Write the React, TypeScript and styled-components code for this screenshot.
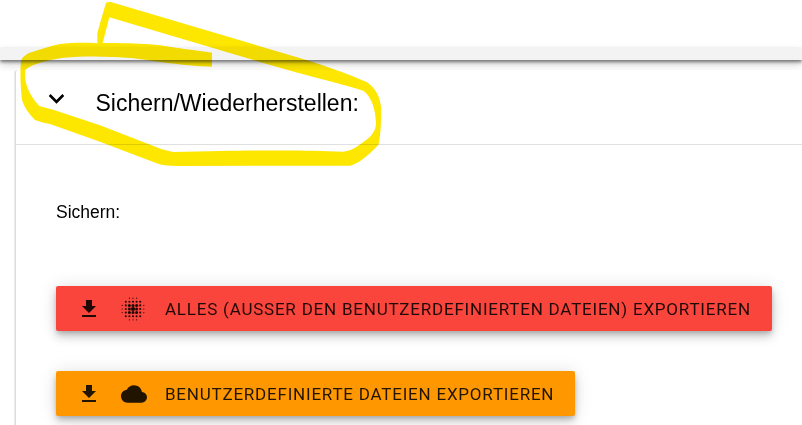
import React from 'react';
import styled, { createGlobalStyle } from 'styled-components';

const Global = createGlobalStyle`
  html, body { margin: 0; padding: 0; background: #fff; }
  body { font-family: "Liberation Sans", Arial, sans-serif; overflow: hidden; }
  #root { width: 802px; height: 425px; overflow: hidden; }
`;

const Page = styled.div`
  position: relative;
  width: 802px;
  height: 425px;
  overflow: hidden;
  background: #fff;
`;

const TopBar = styled.div`
  height: 48px;
  background: #fff;
`;

const Band = styled.div`
  height: 12px;
  background: #f3f3f3;
  box-shadow: 0 2px 3px rgba(0, 0, 0, 0.45), 0 4px 8px rgba(0, 0, 0, 0.2);
  position: relative;
  z-index: 1;
`;

const Panel = styled.section`
  margin: 10px 0 0 15px;
  border-left: 1px solid #dcdcdc;
  box-shadow: -1px 0 1px #ececec;
  border-top-left-radius: 3px;
  background: #fff;
  position: relative;
  z-index: 2;
  height: 400px;
`;

const PanelHeader = styled.div`
  height: 66px;
  padding-bottom: 8px;
  display: flex;
  align-items: center;
  border-bottom: 1px solid #e0e0e0;
`;

const Chevron = styled.svg`
  width: 31px;
  height: 31px;
  margin-left: 24.5px;
  margin-top: -10px;
  fill: #000;
  flex: none;
`;

const Title = styled.h2`
  margin: 0 0 0 24px;
  font-weight: 400;
  font-size: 23px;
  line-height: 28px;
  color: #000;
  font-family: "Liberation Sans", Arial, sans-serif;
`;

const Body = styled.div`
  padding: 58px 26px 0 40px;
  display: flex;
  flex-direction: column;
  align-items: flex-start;
`;

const Label = styled.div`
  font-size: 17.5px;
  line-height: 18px;
  color: #000;
  margin-bottom: 65px;
`;

const Action = styled.button<{ $bg: string }>`
  display: flex;
  align-items: center;
  height: 45px;
  padding: 0 21px;
  margin: 0 0 40px;
  border: 0;
  border-radius: 2px;
  background: ${p => p.$bg};
  color: rgba(0, 0, 0, 0.87);
  font-family: Roboto, sans-serif;
  font-size: 17px;
  letter-spacing: 0.78px;
  white-space: nowrap;
  box-shadow: 0 3px 5px -1px rgba(0, 0, 0, 0.2), 0 6px 10px 0 rgba(0, 0, 0, 0.14), 0 1px 18px 0 rgba(0, 0, 0, 0.12);
`;

const IconSlot = styled.span<{ $width?: number; $gap: number }>`
  display: flex;
  flex: none;
  width: ${p => p.$width ?? 24}px;
  height: 24px;
  margin-right: ${p => p.$gap}px;
  align-items: center;
  justify-content: center;
  & > svg { display: block; flex: none; }
`;

const Marker = styled.svg`
  position: absolute;
  inset: 0;
  width: 802px;
  height: 425px;
  z-index: 3;
  mix-blend-mode: multiply;
  pointer-events: none;
`;

const DownloadIcon = () => (
  <svg width="24" height="24" viewBox="0 0 24 24" fill="rgba(0,0,0,0.87)">
    <path d="M19 9h-4V3H9v6H5l7 7 7-7zM5 18v2h14v-2H5z" />
  </svg>
);

const CloudIcon = () => (
  <svg width="26" height="26" viewBox="0 0 24 24" fill="rgba(0,0,0,0.87)">
    <path d="M19.35 10.04C18.67 6.59 15.64 4 12 4 9.11 4 6.6 5.64 5.35 8.04 2.34 8.36 0 10.91 0 14c0 3.31 2.69 6 6 6h13c2.76 0 5-2.24 5-5 0-2.64-2.05-4.78-4.65-4.96z" />
  </svg>
);

const dots: [number, number, number][] = [];
for (let x = -3; x <= 3; x++) {
  for (let y = -3; y <= 3; y++) {
    const d = Math.hypot(x, y);
    if (d < 3.3) dots.push([x, y, d < 1 ? 2.1 : d < 2 ? 1.5 : d < 3 ? 1.05 : 0.6]);
  }
}

const DotIcon = () => (
  <svg width="24" height="24" viewBox="-12 -12 24 24" fill="rgba(0,0,0,0.87)">
    {dots.map(([x, y, r]) => (
      <circle key={`${x}_${y}`} cx={x * 3.6} cy={y * 3.6} r={r} />
    ))}
  </svg>
);

const strokeOutline =
  'M636 158 C590 152 530 144 480 136 C440 131 400 130 350 129 L308 129 L328 52 L780 186 C900 222 1000 245 1090 272 C1115 290 1127 330 1128 370 C1127 395 1115 410 1085 430 C1065 445 1050 453 1030 455 C900 450 800 450 520 456 C500 452 490 450 470 442 L300 376 L180 336 C150 326 130 322 118 318 C100 300 85 275 78 250 C75 235 74 222 76 210 C90 195 130 182 190 173 C230 170 270 169 300 170 C340 171 380 172 400 175 C440 180 480 186 510 190 C550 195 600 200 636 200 Z';
const strokeOuter =
  'M292 130 C250 127 210 129 180 132 C150 138 120 148 85 160 C72 168 66 174 63 182 C60 210 61 260 66 300 C72 320 85 340 105 360 C120 366 135 369 150 372 L300 425 L470 490 C490 497 510 498 530 498 L1050 497 C1075 492 1100 470 1135 435 C1142 410 1144 360 1143 320 C1140 290 1125 262 1100 246 C1050 225 1000 206 939 186 L330 5 L318 8 L300 70 L292 100 Z';

export default function App() {
  return (
    <Page>
      <Global />
      <TopBar />
      <Band />
      <Panel>
        <PanelHeader>
          <Chevron viewBox="0 0 24 24">
            <path d="M7.41 8.59 12 13.17l4.59-4.58L18 10l-6 6-6-6z" />
          </Chevron>
          <Title>Sichern/Wiederherstellen:</Title>
        </PanelHeader>
        <Body>
          <Label>Sichern:</Label>
          <Action $bg="#f9453c">
            <IconSlot $gap={20}><DownloadIcon /></IconSlot>
            <IconSlot $gap={20}><DotIcon /></IconSlot>
            ALLES (AUSSER DEN BENUTZERDEFINIERTEN DATEIEN) EXPORTIEREN
          </Action>
          <Action $bg="#ff9800">
            <IconSlot $gap={20}><DownloadIcon /></IconSlot>
            <IconSlot $gap={18} $width={26}><CloudIcon /></IconSlot>
            BENUTZERDEFINIERTE DATEIEN EXPORTIEREN
          </Action>
        </Body>
      </Panel>
      <Marker viewBox="0 0 2406 1275">
        <path d={strokeOuter + ' ' + strokeOutline} fill="#fde600" fillRule="evenodd" />
      </Marker>
    </Page>
  );
}
